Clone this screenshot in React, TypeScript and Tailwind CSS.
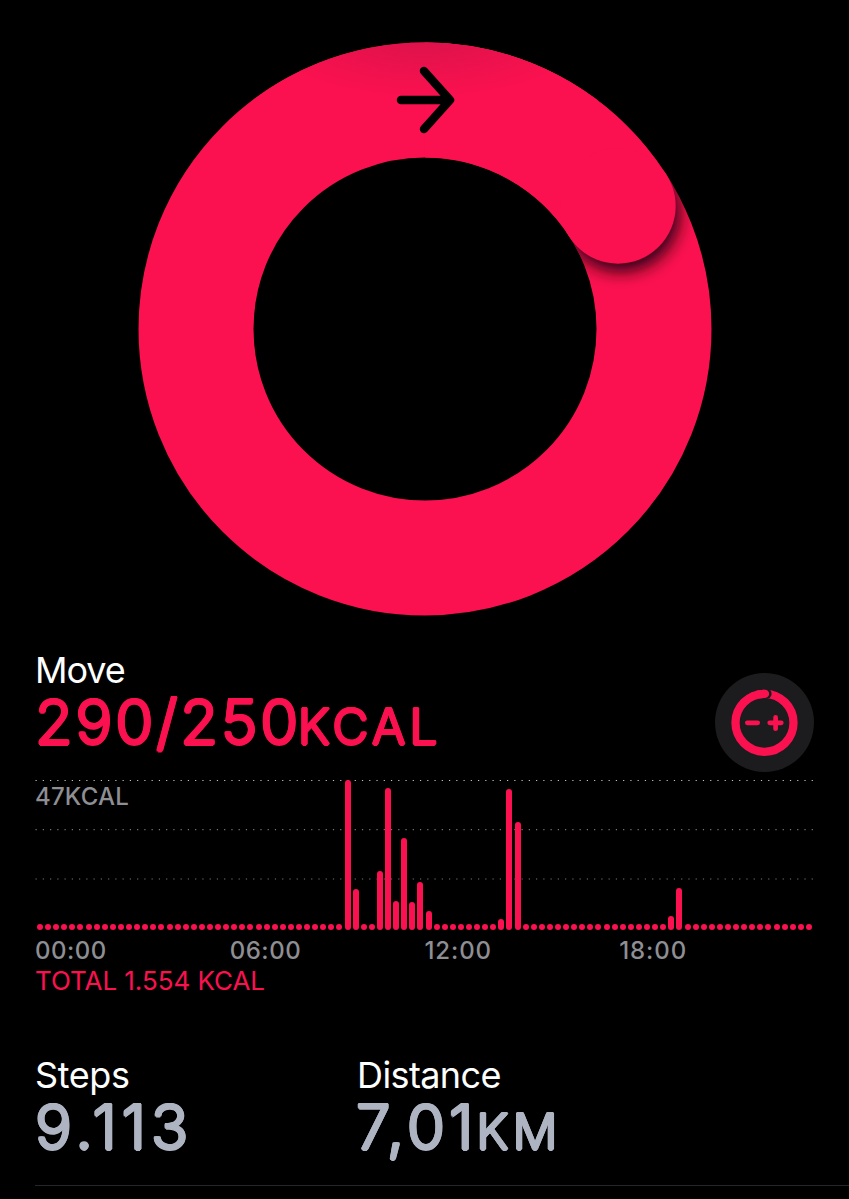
import React from "react";

const SLOT_COUNT = 96;

const activity: Record<number, number> = {
  38: 150, 39: 41.5, 42: 59.5, 43: 142.5, 44: 29.5, 45: 92.5, 46: 28.5,
  47: 48, 48: 19, 57: 11.5, 58: 141.5, 59: 108.5, 78: 14.5, 79: 42.5,
};

const rounded =
  "font-light [text-shadow:1.5px_0_currentColor,-1.5px_0_currentColor,0_1.5px_currentColor,0_-1.5px_currentColor,1.06px_1.06px_currentColor,-1.06px_1.06px_currentColor,1.06px_-1.06px_currentColor,-1.06px_-1.06px_currentColor]";

function MoveRing() {
  return (
    <svg viewBox="0 0 574 574" className="block h-[574px] w-[574px]" fill="none">
      <defs>
        <radialGradient id="start" gradientUnits="userSpaceOnUse" cx="0" cy="0" r="1" gradientTransform="translate(287 -12) scale(170 68)">
          <stop offset="0" stopColor="#d8124a" />
          <stop offset="1" stopColor="#fb114f" />
        </radialGradient>
        <filter id="soft" x="-50%" y="-50%" width="200%" height="200%">
          <feGaussianBlur stdDeviation="8" />
        </filter>
        <clipPath id="band">
          <path clipRule="evenodd" d="M287 .5a286.500 286.500 0 1 1 0 573a286.500 286.500 0 1 1 0-573ZM287 115.500a171.500 171.500 0 1 0 0 343a171.500 171.500 0 1 0 0-343Z" />
        </clipPath>
      </defs>
      <circle cx="287" cy="287" r="229" stroke="#fb114f" strokeWidth="115" />
      <g clipPath="url(#band)">
        <circle cx="483" cy="171" r="59" fill="#1c000b" fillOpacity="0.9" filter="url(#soft)" />
      </g>
      <path d="M287 58A229 229 0 0 1 480 164" stroke="#fb114f" strokeWidth="115" />
      <path d="M110 0H464V58H110Z" fill="url(#start)" clipPath="url(#band)" />
      <circle cx="480" cy="164" r="57.7" fill="#fb114f" />
      <path d="M263 58H311M286 29L312 58L286 87" stroke="#000" strokeWidth="8.500" strokeLinecap="round" strokeLinejoin="round" />
    </svg>
  );
}

function GoalButton() {
  return (
    <button aria-label="Change goal" className="mt-[21px] h-[99px] w-[99px] shrink-0 rounded-full bg-[#1c1c1e]">
      <svg viewBox="0 0 99 99" className="block h-full w-full" fill="none" strokeLinecap="round">
        <circle cx="49.500" cy="49.800" r="29" stroke="#fb114f" strokeWidth="8.300" />
        <circle cx="51.700" cy="20.800" r="4.900" fill="#1c1c1e" />
        <path d="M43 21.500A29 29 0 0 1 50 20.800" stroke="#fb114f" strokeWidth="8.300" />
        <path d="M32.300 49.800H42.700M54.700 49.800H66.300M60.600 44.300V55.700" stroke="#fb114f" strokeWidth="4.700" />
      </svg>
    </button>
  );
}

function HourlyChart() {
  return (
    <section className="mt-[6px]">
      <div className="relative h-[151px]">
        <svg viewBox="0 0 779 151" className="absolute inset-0 h-[151px] w-[779px]">
          {[1.5, 50.7, 100].map((y, i) => (
            <line key={y} x1="0.5" x2="778.500" y1={y} y2={y} stroke={i === 0 ? "#c5c5c7" : "#77777a"} strokeWidth="1.200" strokeDasharray="1.200 6.054" />
          ))}
        </svg>
        <p className="absolute left-0 top-[4px] text-[24px] font-medium leading-[28px] tracking-[0.2px] text-[#8e8e93]">47KCAL</p>
        <div className="relative ml-[2px] flex h-full w-[775.4px] items-end justify-between">
          {Array.from({ length: SLOT_COUNT }, (_, i) => (
            <span key={i} className="w-[6px] rounded-full bg-[#fb114f]" style={{ height: activity[i] ?? 6 }} />
          ))}
        </div>
      </div>
      <div className="mt-[7px] grid w-[779px] grid-cols-4 text-[24px] font-medium leading-[28px] tracking-[0.5px] text-[#8e8e93]">
        <span>00:00</span>
        <span>06:00</span>
        <span className="tracking-[0.9px]">12:00</span>
        <span className="tracking-[0.9px]">18:00</span>
      </div>
      <p className="mt-[1px] text-[26px] leading-[30px] tracking-[-0.05px] text-[#fb114f]">TOTAL 1.554 KCAL</p>
    </section>
  );
}

export default function App() {
  return (
    <main className="h-[1199px] w-full overflow-hidden bg-black pl-[35px] pt-[42px] font-['Inter',sans-serif] text-white">
      <div className="ml-[103px]">
        <MoveRing />
      </div>
      <header className="mt-[36px] flex h-[121px] w-[779px] justify-between">
        <div>
          <h1 className="text-[36px] font-normal leading-[36px] tracking-[-1.1px]">Move</h1>
          <p className={`${rounded} mt-[2px] flex items-baseline leading-[64px] text-[#fb114f]`}>
            <span className="text-[61.500px] tracking-[2.8px]">290/250</span>
            <span className="-ml-[3px] text-[49.500px] tracking-[4.200px]">KCAL</span>
          </p>
        </div>
        <GoalButton />
      </header>
      <HourlyChart />
      <section className="mt-[61px] flex h-[129px] border-b border-[#262629]">
        <div className="w-[322px]">
          <h2 className="text-[36px] font-normal leading-[36px] tracking-[-0.4px]">Steps</h2>
          <p className={`${rounded} mt-[2px] text-[61.500px] leading-[64px] tracking-[5px] text-[#aeb4c1]`}>9.113</p>
        </div>
        <div>
          <h2 className="text-[36px] font-normal leading-[36px] tracking-[-0.6px]">Distance</h2>
          <p className={`${rounded} -ml-[1px] mt-[2px] flex items-baseline leading-[64px] text-[#aeb4c1]`}>
            <span className="text-[61.500px] tracking-[4.200px]">7,01</span>
            <span className="-ml-[1px] text-[49.500px] tracking-[4.200px]">KM</span>
          </p>
        </div>
      </section>
    </main>
  );
}
